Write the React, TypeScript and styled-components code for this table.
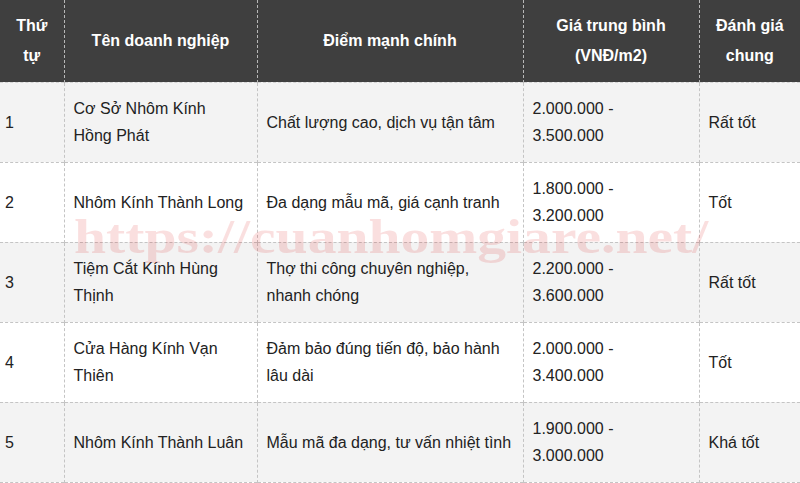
import styled, { createGlobalStyle } from "styled-components";

const GlobalStyle = createGlobalStyle`
  *, *::before, *::after {
    box-sizing: border-box;
  }
  body {
    margin: 0;
    background: #ffffff;
    font-family: "Liberation Sans", Arial, sans-serif;
  }
`;

const Wrapper = styled.div`
  position: relative;
  width: 800px;
  height: 483px;
  overflow: hidden;
  background: #ffffff;
`;

const Table = styled.table`
  width: 800px;
  border-collapse: collapse;
  table-layout: fixed;
  font-size: 16px;
`;

const Col = styled.col<{ w: number }>`
  width: ${(p) => p.w}px;
`;

const HeadRow = styled.tr`
  height: 82px;
  background: #3f3f3f;
  border-bottom: 1px dashed #d4d4d4;
`;

const HeadCell = styled.th`
  padding: 0 9px;
  color: #ffffff;
  font-weight: bold;
  font-size: 16px;
  line-height: 30px;
  text-align: center;
  vertical-align: middle;
  border-left: 1px dashed #b8b8b8;
  &:first-child {
    border-left: none;
  }
`;

const Row = styled.tr<{ shade: boolean }>`
  height: 80px;
  background: ${(p) => (p.shade ? "#f3f3f3" : "#ffffff")};
  border-bottom: 1px dashed #c4c4c4;
`;

const Cell = styled.td<{ padLeft: number; padRight: number }>`
  padding: 0 ${(p) => p.padRight}px 0 ${(p) => p.padLeft}px;
  color: #222222;
  line-height: 27px;
  vertical-align: middle;
  border-left: 1px dashed #c4c4c4;
  &:first-child {
    border-left: none;
  }
`;

// watermark stamped over the table, a bit stretched like the original
const Watermark = styled.div`
  position: absolute;
  left: 74px;
  top: 202px;
  font-family: "Liberation Serif", "Times New Roman", serif;
  font-weight: bold;
  font-size: 48px;
  line-height: 70px;
  color: rgba(220, 30, 30, 0.14);
  white-space: nowrap;
  transform: scaleX(1.2);
  transform-origin: left center;
  pointer-events: none;
`;

const columns = [
  { label: "Thứ tự", w: 64, padLeft: 5, padRight: 5 },
  { label: "Tên doanh nghiệp", w: 193, padLeft: 9, padRight: 9 },
  { label: "Điểm mạnh chính", w: 266, padLeft: 9, padRight: 9 },
  { label: "Giá trung bình (VNĐ/m2)", w: 176, padLeft: 9, padRight: 30 },
  { label: "Đánh giá chung", w: 101, padLeft: 9, padRight: 9 },
];

const rows = [
  ["1", "Cơ Sở Nhôm Kính Hồng Phát", "Chất lượng cao, dịch vụ tận tâm", "2.000.000 - 3.500.000", "Rất tốt"],
  ["2", "Nhôm Kính Thành Long", "Đa dạng mẫu mã, giá cạnh tranh", "1.800.000 - 3.200.000", "Tốt"],
  ["3", "Tiệm Cắt Kính Hùng Thịnh", "Thợ thi công chuyên nghiệp, nhanh chóng", "2.200.000 - 3.600.000", "Rất tốt"],
  ["4", "Cửa Hàng Kính Vạn Thiên", "Đảm bảo đúng tiến độ, bảo hành lâu dài", "2.000.000 - 3.400.000", "Tốt"],
  ["5", "Nhôm Kính Thành Luân", "Mẫu mã đa dạng, tư vấn nhiệt tình", "1.900.000 - 3.000.000", "Khá tốt"],
];

function App() {
  return (
    <Wrapper>
      <GlobalStyle />
      <Table>
        <colgroup>
          {columns.map((c) => (
            <Col key={c.label} w={c.w} />
          ))}
        </colgroup>
        <thead>
          <HeadRow>
            {columns.map((c) => (
              <HeadCell key={c.label}>{c.label}</HeadCell>
            ))}
          </HeadRow>
        </thead>
        <tbody>
          {rows.map((r, i) => (
            <Row key={r[0]} shade={i % 2 === 0}>
              {r.map((v, j) => (
                <Cell key={j} padLeft={columns[j].padLeft} padRight={columns[j].padRight}>
                  {v}
                </Cell>
              ))}
            </Row>
          ))}
        </tbody>
      </Table>
      <Watermark>https://cuanhomgiare.net/</Watermark>
    </Wrapper>
  );
}

export default App;
